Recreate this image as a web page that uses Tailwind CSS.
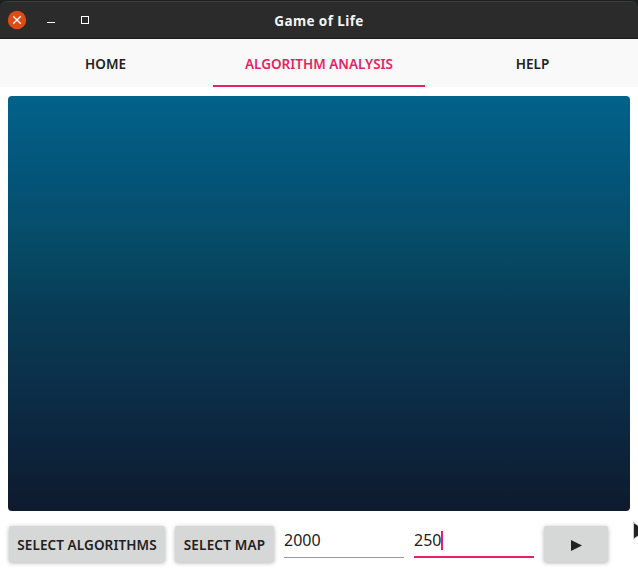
<!DOCTYPE html>
<html lang="en">
<head>
<meta charset="utf-8">
<title>Game of Life</title>
<script src="https://cdn.jsdelivr.net/npm/@tailwindcss/browser@4"></script>
</head>
<body class="bg-white">
<div class="relative flex h-[568px] w-[638px] flex-col overflow-hidden bg-white font-['Noto_Sans',sans-serif] text-[#212121]">
  <header class="h-[39px] shrink-0 bg-[#1d2021] pt-px">
    <div class="grid h-[38px] grid-cols-[1fr_auto_1fr] items-center rounded-t-[7px] border-t border-b border-t-[#3b3b3b] border-b-[#1d191a] bg-[#2b2b2b]">
      <svg class="h-9 w-[110px]" viewBox="0 0 110 36" fill="none">
        <circle cx="17" cy="18" r="9.2" fill="#dd4b17"/>
        <path d="M13.200 14.200l7.600 7.600M20.800 14.200l-7.600 7.600" stroke="#fff" stroke-width="1.3"/>
        <path d="M47 20.500h8" stroke="#fff"/>
        <rect x="81.500" y="14.500" width="7" height="7" stroke="#fff"/>
      </svg>
      <h1 class="pt-0.5 text-[13.5px] leading-5 font-bold tracking-[0.4px] whitespace-nowrap text-[#f4f4f4]">Game of Life</h1>
    </div>
  </header>
  <nav class="grid h-12 shrink-0 grid-cols-[211px_214px_213px] bg-[#f9f9f9] text-center text-[13.5px] leading-[50px] font-semibold">
    <span>HOME</span>
    <span class="ml-[2px] h-12 border-b-2 border-[#e91e63] text-[#e91e63]">ALGORITHM ANALYSIS</span>
    <span class="pl-0.5">HELP</span>
  </nav>
  <main class="mx-2 mt-[9px] h-[415px] shrink-0 rounded-[4px] bg-[linear-gradient(180deg,#02628a_0%,#045479_20%,#064b66_36%,#083d57_50%,#0b2e49_70%,#0e1a2e_100%)]"></main>
  <footer class="mt-[15px] flex items-start pl-[9px] text-[13.5px] font-semibold">
    <button class="h-9 w-[156px] rounded-[2px] bg-[#d6d7d7] pt-0.5 tracking-[0.1px] whitespace-nowrap shadow-[0_1px_4px_rgba(0,0,0,0.3)]">SELECT ALGORITHMS</button>
    <button class="ml-2.5 h-9 w-[99px] rounded-[2px] bg-[#d6d7d7] pt-0.5 tracking-[0.2px] whitespace-nowrap shadow-[0_1px_4px_rgba(0,0,0,0.3)]">SELECT MAP</button>
    <div class="ml-2.5 h-8 w-[120px] border-b border-[#999] text-[16px] leading-[29px] font-normal">2000</div>
    <div class="ml-2.5 flex h-8 w-[120px] border-b-2 border-[#e91e63] text-[16px] leading-[29px] font-normal"><span>250</span><i class="mt-[5px] h-[19px] w-[2px] bg-[#e91e63]"></i></div>
    <button class="ml-2.5 flex h-9 w-16 items-center justify-center rounded-[2px] bg-[#d6d7d7] shadow-[0_1px_4px_rgba(0,0,0,0.3)]"><svg class="mt-[3px] h-[11px] w-[11px]" viewBox="0 0 11 11"><path d="M0 0L11 5.500L0 11Z" fill="#212121"/></svg></button>
  </footer>
  <svg class="absolute top-[521px] left-[632px] h-5 w-4" viewBox="0 0 16 20"><path d="M1.500 1.500V18L14 9.800Z" fill="#222" stroke="#ccc"/></svg>
</div>
</body>
</html>
